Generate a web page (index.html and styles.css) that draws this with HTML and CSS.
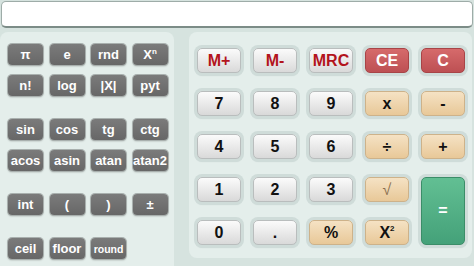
FILE: index.html
```html
<!DOCTYPE html>
<html lang="en">
<head>
  <meta charset="UTF-8" />
  <meta name="viewport" content="width=device-width, initial-scale=1.0" />
  <title>Calculator</title>
  <link rel="stylesheet" href="styles.css">
</head>
<body>
  <div class="display" id="display"></div>

  <div class="calc">
    <div class="panel sci">
      <div class="group">
        <button class="fn">&pi;</button>
        <button class="fn">e</button>
        <button class="fn">rnd</button>
        <button class="fn">X<sup>n</sup></button>
        <button class="fn">n!</button>
        <button class="fn">log</button>
        <button class="fn">|X|</button>
        <button class="fn">pyt</button>
      </div>
      <div class="group">
        <button class="fn">sin</button>
        <button class="fn">cos</button>
        <button class="fn">tg</button>
        <button class="fn">ctg</button>
        <button class="fn">acos</button>
        <button class="fn">asin</button>
        <button class="fn">atan</button>
        <button class="fn">atan2</button>
      </div>
      <div class="group">
        <button class="fn">int</button>
        <button class="fn">(</button>
        <button class="fn">)</button>
        <button class="fn">&plusmn;</button>
      </div>
      <div class="group">
        <button class="fn">ceil</button>
        <button class="fn">floor</button>
        <button class="fn small">round</button>
      </div>
    </div>

    <div class="panel keys">
      <button class="key mem">M+</button>
      <button class="key mem">M-</button>
      <button class="key mem">MRC</button>
      <button class="key clear">CE</button>
      <button class="key clear">C</button>

      <button class="key">7</button>
      <button class="key">8</button>
      <button class="key">9</button>
      <button class="key op">x</button>
      <button class="key op">-</button>

      <button class="key">4</button>
      <button class="key">5</button>
      <button class="key">6</button>
      <button class="key op">&divide;</button>
      <button class="key op">+</button>

      <button class="key">1</button>
      <button class="key">2</button>
      <button class="key">3</button>
      <button class="key op root">&radic;</button>
      <button class="key equals">=</button>

      <button class="key">0</button>
      <button class="key">.</button>
      <button class="key op">%</button>
      <button class="key op">X<sup>2</sup></button>
    </div>
  </div>
</body>
</html>
```

FILE: styles.css
```css
html, body {
  margin: 0;
  padding: 0;
  font-family: "Liberation Sans", Arial, sans-serif;
  background: #d6e3df;
  overflow: hidden;
}
.display {
  height: 24px;
  margin: 1px 1px 0 1px;
  background: #fff;
  border: 1px solid #9eaca8;
  border-bottom: 2px solid #7c8c87;
  border-radius: 5px;
}
.calc {
  display: flex;
  margin-top: 4px;
}
.panel {
  background: #e4eeeb;
  border-radius: 8px 8px 0 0;
  box-sizing: border-box;
}

/* scientific buttons */
.sci {
  width: 174px;
  height: 240px;
  padding: 12px 0 0 8px;
  display: flex;
  flex-direction: column;
  gap: 23px;
}
.group {
  display: grid;
  grid-template-columns: repeat(4, 35px);
  column-gap: 6.5px;
  row-gap: 10px;
}
.fn {
  height: 21px;
  padding: 0;
  border: none;
  border-radius: 4px;
  background: linear-gradient(#7b7b7b, #676767);
  box-shadow: 0 0 0 1px #a9b0ae, 0 1px 2px rgba(0, 0, 0, 0.35);
  color: #fff;
  font-family: inherit;
  font-weight: bold;
  font-size: 13px;
  white-space: nowrap;
  overflow: visible;
}
.fn sup { font-size: 8px; vertical-align: 5px; }
.fn.small { font-size: 10.5px; }

/* main keypad */
.keys {
  width: 283px;
  height: 226px;
  margin-left: 15px;
  border-radius: 8px;
  padding: 16px 0 0 8px;
  display: grid;
  grid-template-columns: repeat(5, 44px);
  grid-template-rows: repeat(5, 25px);
  column-gap: 12px;
  row-gap: 18px;
}
.key {
  padding: 0;
  border: 1px solid #b9bdbd;
  border-radius: 5px;
  background: linear-gradient(#fbfbfb, #d9d9d9);
  box-shadow: 0 0 0 3px #cfdcd9, 0 2px 2px rgba(0, 0, 0, 0.25);
  color: #111;
  font-family: inherit;
  font-weight: bold;
  font-size: 16px;
}
.key sup { font-size: 8px; vertical-align: 7px; }
.key.mem { color: #b3141c; }
.key.clear {
  background: linear-gradient(#d66a6b, #bd5053);
  border-color: #a84447;
  color: #fff;
}
.key.op {
  background: linear-gradient(#f5e2c4, #e8c898);
  border-color: #cdb28a;
}
.key.root { color: #8a7050; font-weight: normal; font-size: 16px; }
.key.equals {
  grid-row: span 2;
  background: linear-gradient(#62bf93, #44a179);
  border-color: #3b8d68;
  color: #fff;
  font-size: 16px;
}
```
